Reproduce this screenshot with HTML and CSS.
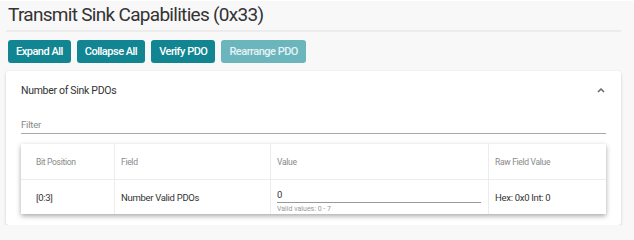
FILE: index.html
```html
<!DOCTYPE html>
<html>

<head>
    <title>Transmit Sink Capabilities</title>
    <link rel="stylesheet" href="styles.css">
</head>

<body>
    <div class="page">
        <h1 class="title">Transmit Sink Capabilities (0x33)</h1>
        <div class="toolbar">
            <button class="btn">Expand All</button>
            <button class="btn">Collapse All</button>
            <button class="btn">Verify PDO</button>
            <button class="btn disabled">Rearrange PDO</button>
        </div>

        <div class="card">
            <div class="card-header">
                <span>Number of Sink PDOs</span>
                <svg class="chevron" width="8" height="6" viewBox="0 0 8 6">
                    <path d="M1 5 L4 2 L7 5" fill="none" stroke="#666" stroke-width="1.5" />
                </svg>
            </div>
            <div class="filter">Filter</div>

            <table class="fields">
                <thead>
                    <tr>
                        <th class="col-bit">Bit Position</th>
                        <th class="col-field">Field</th>
                        <th class="col-value">Value</th>
                        <th>Raw Field Value</th>
                    </tr>
                </thead>
                <tbody>
                    <tr>
                        <td>[0:3]</td>
                        <td>Number Valid PDOs</td>
                        <td class="value-cell">
                            <div class="value-input">0</div>
                            <div class="hint">Valid values: 0 - 7</div>
                        </td>
                        <td>Hex: 0x0 Int: 0</td>
                    </tr>
                </tbody>
            </table>
        </div>
    </div>
</body>

</html>
```

FILE: styles.css
```css
body {
    margin: 0;
    background: #f8f8f8;
    font-family: Roboto, "Liberation Sans", sans-serif;
    color: #333;
    border-top: 1px solid #fff;
}

.page {
    padding: 0 13px 0 6px;
}

.title {
    margin: 0;
    padding: 4px 0 5px 2px;
    font-size: 19px;
    font-weight: 400;
    letter-spacing: -0.7px;
    line-height: 20px;
    color: #333;
    border-bottom: 2px solid #ececec;
}

.toolbar {
    display: flex;
    gap: 6px;
    padding: 8px 0 8px 2px;
}

.btn {
    background: #128592;
    color: #fff;
    border: none;
    border-radius: 3px;
    font-family: Roboto, "Liberation Sans", sans-serif;
    font-size: 11px;
    font-weight: 500;
    letter-spacing: -0.5px;
    height: 23px;
    padding: 0 8px;
}

.btn.disabled {
    background: #6bb5bd;
    color: #e6f3f4;
}

.card {
    background: #fff;
    border-radius: 3px;
    box-shadow: 0 1px 3px rgba(0, 0, 0, 0.18);
    padding: 0 15px 11px 15px;
}

.card-header {
    display: flex;
    justify-content: space-between;
    align-items: center;
    height: 38px;
    font-size: 10.5px;
    letter-spacing: -0.3px;
    color: #333;
}

.chevron {
    margin-right: 1px;
}

.filter {
    margin-top: 10px;
    padding-bottom: 3px;
    font-size: 9.5px;
    letter-spacing: -0.2px;
    color: #888;
    border-bottom: 1px solid #aaa;
}

.fields {
    width: 100%;
    margin-top: 10px;
    border-collapse: collapse;
    table-layout: fixed;
    background: #fff;
    box-shadow: 0 2px 5px rgba(0, 0, 0, 0.35);
    font-size: 9.5px;
    letter-spacing: -0.3px;
}

.fields th,
.fields td {
    text-align: left;
    padding: 0 6px;
    border-left: 1px solid #ececec;
}

.fields th:first-child,
.fields td:first-child {
    border-left: none;
    padding-left: 15px;
}

.fields th {
    height: 35px;
    font-size: 8.5px;
    font-weight: 400;
    color: #888;
    border-bottom: 1px solid #ececec;
}

.fields td {
    height: 34px;
    color: #333;
}

.col-bit {
    width: 72px;
}

.col-field {
    width: 143px;
}

.col-value {
    width: 205px;
}

.value-cell {
    vertical-align: bottom;
}

.value-input {
    font-size: 9.5px;
    padding-bottom: 2px;
    margin-right: 1px;
    border-bottom: 1px solid #999;
}

.hint {
    font-size: 7px;
    letter-spacing: 0;
    color: #999;
    padding: 2px 0 1px;
}
```
